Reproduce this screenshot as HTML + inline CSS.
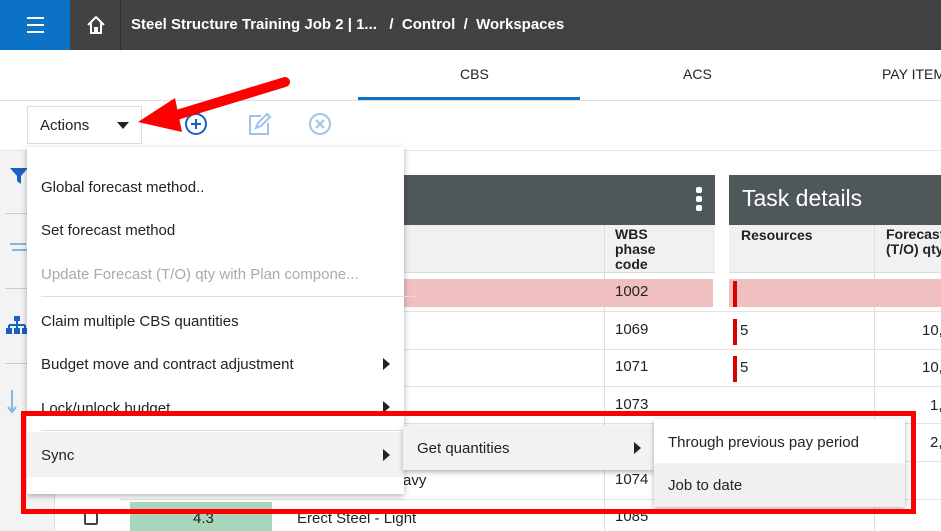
<!DOCTYPE html>
<html><head><meta charset="utf-8"><style>
*{box-sizing:border-box;margin:0;padding:0}
body{width:941px;height:531px;overflow:hidden;position:relative;background:#fff;font-family:"Liberation Sans",Roboto,sans-serif;color:#222}
.a{position:absolute}
.t{font-size:15px;white-space:nowrap}
</style></head><body>
<div class="a" style="left:0;top:0;width:941px;height:50px;background:#424242"></div>
<div class="a" style="left:0;top:0;width:70px;height:50px;background:#0b72c6"></div>
<div class="a" style="left:27px;top:17px;width:17px;height:2px;background:#fff;box-shadow:0 7px 0 #fff,0 14px 0 #fff"></div>
<div class="a" style="left:120px;top:0;width:1px;height:50px;background:#2e2e2e"></div>
<svg class="a" style="left:86px;top:15px" width="20" height="20" viewBox="0 0 20 20"><path d="M2 10 L10 2 L18 10 M5 8 V18 H9 V13 H11 V18 H15 V8" fill="none" stroke="#fff" stroke-width="2"/></svg>
<div class="a t" style="left:131px;top:16px;color:#fff;font-weight:bold;font-size:15px">Steel Structure Training Job 2 | 1...&nbsp;&nbsp;&nbsp;/&nbsp;&nbsp;Control&nbsp;&nbsp;/&nbsp;&nbsp;Workspaces</div>
<div class="a t" style="left:460px;top:66px;font-size:14px">CBS</div>
<div class="a t" style="left:683px;top:66px;font-size:14px">ACS</div>
<div class="a t" style="left:882px;top:66px;font-size:14px">PAY ITEM</div>
<div class="a" style="left:358px;top:97px;width:222px;height:3px;background:#0b72c6"></div>
<div class="a" style="left:0;top:100px;width:941px;height:1px;background:#ddd"></div>
<div class="a" style="left:27px;top:106px;width:115px;height:38px;border:1px solid #ddd"></div>
<div class="a t" style="left:40px;top:117px">Actions</div>
<div class="a" style="left:117px;top:122px;border-left:6px solid transparent;border-right:6px solid transparent;border-top:7px solid #222"></div>
<svg class="a" style="left:184px;top:112px" width="24" height="24"><circle cx="12" cy="12" r="10" fill="none" stroke="#1a5fc4" stroke-width="2"/><path d="M12 7v10M7 12h10" stroke="#1a5fc4" stroke-width="2"/></svg>
<svg class="a" style="left:247px;top:111px" width="26" height="26"><path d="M14 5H3v18h18V12" fill="none" stroke="#9cc3ea" stroke-width="2"/><path d="M9 17l2-5 9-9 3 3-9 9z" fill="none" stroke="#9cc3ea" stroke-width="2"/></svg>
<svg class="a" style="left:308px;top:112px" width="24" height="24"><circle cx="12" cy="12" r="10" fill="none" stroke="#9cc3ea" stroke-width="2"/><path d="M8 8l8 8M16 8l-8 8" stroke="#9cc3ea" stroke-width="2"/></svg>
<svg class="a" style="left:130px;top:70px" width="170" height="70"><path d="M155 12 L40 47" stroke="#f00" stroke-width="10" stroke-linecap="round"/><path d="M8 52 L45 28 L52 62 Z" fill="#f00"/></svg>
<div class="a" style="left:0;top:150px;width:941px;height:1px;background:#e5e5e5"></div>
<div class="a" style="left:0;top:151px;width:55px;height:380px;background:#f3f3f3;border-right:1px solid #ddd"></div>
<svg class="a" style="left:9px;top:166px" width="20" height="20"><path d="M1 2h18l-7 8v8l-4-3v-5z" fill="#1a5fc4"/></svg>
<div class="a" style="left:5px;top:213px;width:50px;height:1px;background:#ccc"></div>
<div class="a" style="left:10px;top:243px;width:16px;height:2px;background:#8ab4e0;box-shadow:2px 6px 0 -0px #8ab4e0"></div>
<div class="a" style="left:5px;top:288px;width:50px;height:1px;background:#ccc"></div>
<svg class="a" style="left:6px;top:315px" width="22" height="20"><rect x="8" y="1" width="6" height="5" fill="#1a5fc4"/><path d="M11 6v4M3 10h16M3 10v3M11 10v3M19 10v3" stroke="#1a5fc4" stroke-width="2" fill="none"/><rect x="0" y="13" width="6" height="6" fill="#1a5fc4"/><rect x="8" y="13" width="6" height="6" fill="#1a5fc4"/><rect x="16" y="13" width="6" height="6" fill="#1a5fc4"/></svg>
<div class="a" style="left:5px;top:363px;width:50px;height:1px;background:#ccc"></div>
<svg class="a" style="left:6px;top:388px" width="20" height="28"><path d="M6 2v22M2 19l4 5 4-5" stroke="#8ab4e0" stroke-width="2" fill="none"/></svg>
<div class="a" style="left:120px;top:175px;width:595px;height:50px;background:#4f5859"></div>
<div class="a" style="left:696px;top:187px;width:6px;height:6px;background:#fff;border-radius:2px;box-shadow:0 9px 0 #fff,0 18px 0 #fff"></div>
<div class="a" style="left:729px;top:175px;width:212px;height:50px;background:#4f5859"></div>
<div class="a" style="left:742px;top:185px;color:#fff;font-size:23px">Task details</div>
<div class="a" style="left:120px;top:225px;width:595px;height:48px;background:#f1f1f1;border-bottom:1px solid #ddd"></div>
<div class="a" style="left:729px;top:225px;width:212px;height:48px;background:#f1f1f1;border-bottom:1px solid #ddd"></div>
<div class="a" style="left:604px;top:225px;width:1px;height:306px;background:#ddd"></div>
<div class="a" style="left:874px;top:225px;width:1px;height:306px;background:#ddd"></div>
<div class="a" style="left:615px;top:227px;font-size:14px;font-weight:bold;line-height:15px">WBS<br>phase<br>code</div>
<div class="a" style="left:741px;top:227px;font-size:14px;font-weight:bold">Resources</div>
<div class="a" style="left:886px;top:227px;font-size:14px;font-weight:bold;line-height:15px">Forecast<br>(T/O) qty</div>
<div class="a" style="left:120px;top:279px;width:593px;height:28px;background:#f0c0c0"></div>
<div class="a" style="left:729px;top:279px;width:212px;height:28px;background:#f0c0c0"></div>
<div class="a t" style="left:615px;top:283px">1002</div>
<div class="a t" style="left:615px;top:321px">1069</div>
<div class="a t" style="left:615px;top:358px">1071</div>
<div class="a t" style="left:615px;top:396px">1073</div>
<div class="a t" style="left:615px;top:471px">1074</div>
<div class="a t" style="left:615px;top:508px">1085</div>
<div class="a t" style="left:740px;top:322px">5</div><div class="a t" style="left:740px;top:359px">5</div>
<div class="a t" style="left:922px;top:322px">10,</div><div class="a t" style="left:922px;top:359px">10,</div><div class="a t" style="left:930px;top:397px">1,</div><div class="a t" style="left:930px;top:434px">2,</div>
<div class="a" style="left:733px;top:319px;width:4px;height:26px;border-left:2px solid #d00;border-right:2px solid #d00"></div>
<div class="a" style="left:733px;top:356px;width:4px;height:26px;border-left:2px solid #d00;border-right:2px solid #d00"></div>
<div class="a" style="left:733px;top:281px;width:4px;height:26px;border-left:2px solid #d00;border-right:2px solid #d00"></div>
<div class="a" style="left:120px;top:311px;width:821px;height:1px;background:#e2e2e2;box-shadow:0 38px 0 #e2e2e2,0 75px 0 #e2e2e2,0 112px 0 #e2e2e2,0 150px 0 #e2e2e2,0 188px 0 #e2e2e2"></div>
<div class="a" style="left:130px;top:502px;width:142px;height:29px;background:#a8d5bc"></div>
<div class="a t" style="left:193px;top:510px">4.3</div>
<div class="a" style="left:84px;top:511px;width:14px;height:14px;border:2px solid #444;border-radius:2px"></div>
<div class="a t" style="left:297px;top:510px">Erect Steel - Light</div>
<div class="a t" style="left:403px;top:472px">avy</div>
<div class="a" style="left:27px;top:147px;width:377px;height:347px;background:#fff;box-shadow:0 2px 6px rgba(0,0,0,.3)"></div>
<div class="a t" style="left:41px;top:179px">Global forecast method..</div>
<div class="a t" style="left:41px;top:222px">Set forecast method</div>
<div class="a t" style="left:41px;top:266px;color:#aaa">Update Forecast (T/O) qty with Plan compone...</div>
<div class="a" style="left:41px;top:296px;width:375px;height:1px;background:#ddd"></div>
<div class="a t" style="left:41px;top:313px">Claim multiple CBS quantities</div>
<div class="a t" style="left:41px;top:356px">Budget move and contract adjustment</div>
<div class="a" style="left:383px;top:358px;border-top:6px solid transparent;border-bottom:6px solid transparent;border-left:7px solid #222"></div>
<div class="a t" style="left:41px;top:400px">Lock/unlock budget</div>
<div class="a" style="left:383px;top:401px;border-top:6px solid transparent;border-bottom:6px solid transparent;border-left:7px solid #222"></div>
<div class="a" style="left:41px;top:430px;width:363px;height:1px;background:#ddd"></div>
<div class="a" style="left:27px;top:432px;width:377px;height:45px;background:#f2f2f2"></div>
<div class="a t" style="left:41px;top:447px">Sync</div>
<div class="a" style="left:383px;top:449px;border-top:6px solid transparent;border-bottom:6px solid transparent;border-left:7px solid #222"></div>
<div class="a" style="left:403px;top:426px;width:252px;height:44px;background:#f2f2f2;box-shadow:0 2px 5px rgba(0,0,0,.3)"></div>
<div class="a t" style="left:417px;top:440px">Get quantities</div>
<div class="a" style="left:634px;top:442px;border-top:6px solid transparent;border-bottom:6px solid transparent;border-left:7px solid #222"></div>
<div class="a" style="left:654px;top:419px;width:251px;height:88px;background:#fff;box-shadow:0 2px 5px rgba(0,0,0,.3)"></div>
<div class="a" style="left:654px;top:463px;width:251px;height:44px;background:#f0f0f0"></div>
<div class="a t" style="left:668px;top:434px">Through previous pay period</div>
<div class="a t" style="left:668px;top:477px">Job to date</div>
<div class="a" style="left:21px;top:411px;width:895px;height:103px;border:5px solid #f00"></div>
</body></html>
